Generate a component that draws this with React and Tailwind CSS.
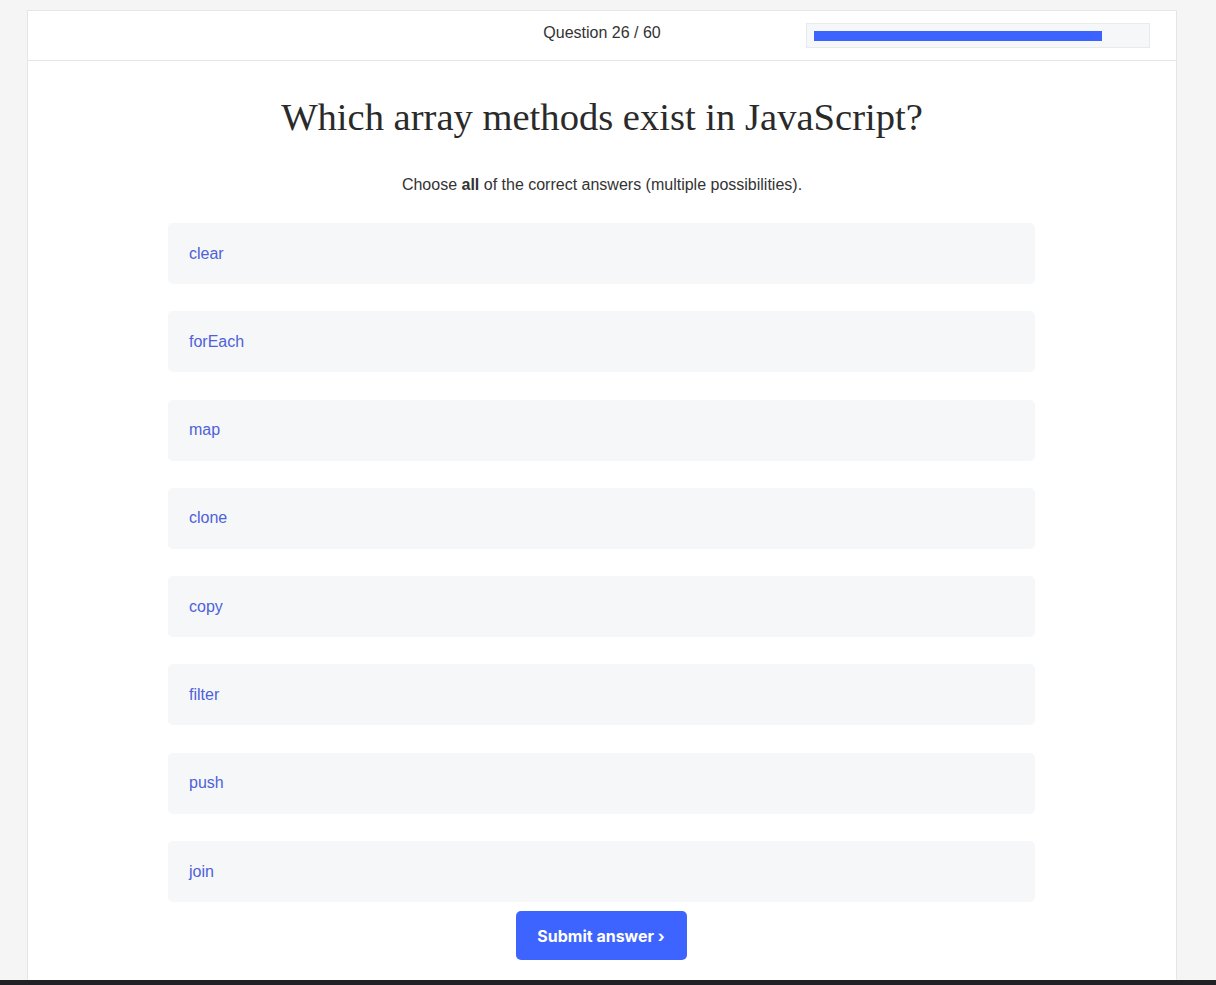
export default function App() {
  const options = ["clear", "forEach", "map", "clone", "copy", "filter", "push", "join"];
  return (
    <div className="min-h-[985px] h-[985px] bg-[#f5f5f5] flex flex-col overflow-hidden" style={{ fontFamily: '"Liberation Sans", Arial, sans-serif' }}>
      <div className="flex-1 mt-[10px] ml-[27px] w-[1150px] bg-white border border-[#e6e6e6] border-b-0 flex flex-col">
        <div className="h-[50px] border-b border-[#e6e6e6] grid grid-cols-3 items-center">
          <div />
          <div className="text-center text-[16px] text-[#333] mb-[6px]">Question 26 / 60</div>
          <div className="flex">
            <div className="ml-[13px] w-[344px] h-[25px] bg-[#f6f7f8] border border-[#e8eaed] flex items-center px-[7px]">
              <div className="h-[10px] bg-[#3d63ff]" style={{ width: "288px" }} />
            </div>
          </div>
        </div>
        <h1 className="mt-[34px] text-center text-[38.6px] leading-[44px] text-[#2a2a2a]" style={{ fontFamily: 'Georgia, "Liberation Serif", serif' }}>
          Which array methods exist in JavaScript?
        </h1>
        <p className="mt-[34px] text-center text-[16px] text-[#333]">
          Choose <b>all</b> of the correct answers (multiple possibilities).
        </p>
        <div className="mt-[26px] w-[867px] ml-[140px] flex flex-col gap-[27.3px]">
          {options.map((o) => (
            <div key={o} className="h-[61px] bg-[#f6f7f9] rounded-[5px] flex items-center pl-[21px] text-[16px] text-[#4d62d9]">
              {o}
            </div>
          ))}
        </div>
        <div className="flex justify-center mt-[9px]">
          <button className="w-[171px] h-[49px] rounded-[5px] bg-[#3e64ff] text-white font-bold text-[16px] mr-[2px]" style={{ fontFamily: 'Inter, "Liberation Sans", sans-serif' }}>
            Submit answer ›
          </button>
        </div>
      </div>
      <div className="h-[5px] bg-[#202124]" />
    </div>
  );
}
